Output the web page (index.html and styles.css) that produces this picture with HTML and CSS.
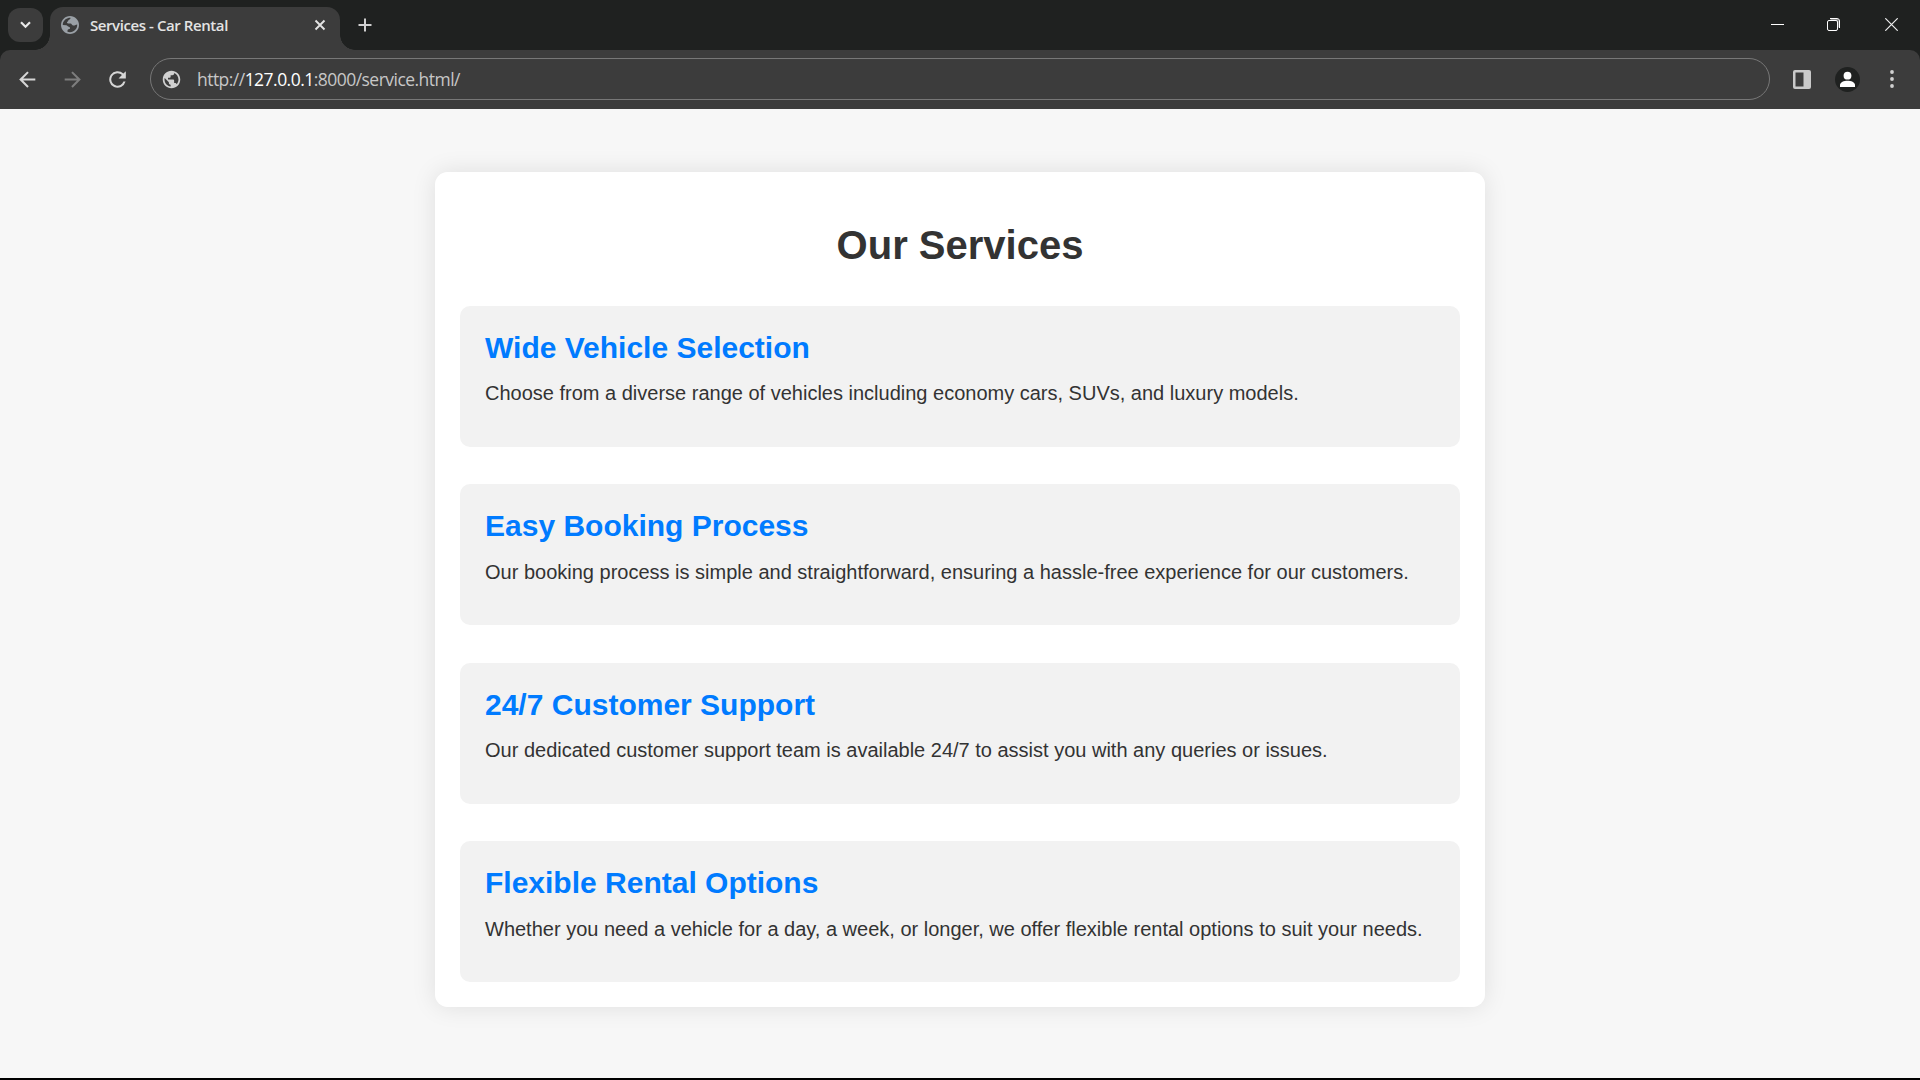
FILE: index.html
```html
<!DOCTYPE html>
<html lang="en">
<head>
<meta charset="utf-8">
<title>Services - Car Rental</title>
<link rel="stylesheet" href="styles.css">
</head>
<body>
<header class="browser">
  <div class="tabstrip">
    <button class="tab-search" aria-label="Search tabs"><svg width="35" height="34" viewBox="0 0 35 34"><path d="M13 14.2l4.5 4.5 4.5-4.5" fill="none" stroke="#e8e8e8" stroke-width="2.2"/></svg></button>
    <div class="tab">
      <svg class="tab-globe" width="18" height="18" viewBox="2 2 20 20"><path fill="#9aa0a6" d="M12 2C6.480 2 2 6.480 2 12s4.480 10 10 10 10-4.480 10-10S17.520 2 12 2z"/><path fill="#3c3c3c" d="M4 10.500 C5 6.500 8.500 3.900 12.500 4 C12.800 5.300 11.800 5.800 10.800 6.200 C9.800 6.600 10.200 8.100 9 8.500 C8.200 8.800 8.700 10.400 10 10.400 H12.500 C14 10.400 14 12.500 15.300 12.500 H17 C18 12.500 18.200 11.500 20 11.500 C20.300 16 16.700 20 12 20 C11 20 10 19.800 9.200 19.500 V18.500 C9.200 17.300 10.100 16.800 11.200 16.500 C12.500 16.200 12.300 14.300 10.800 13.900 C9.300 13.600 9.200 12.400 7.800 12.200 L4 12z"/></svg>
      <span class="tab-title">Services - Car Rental</span>
      <svg width="12" height="12" viewBox="0 0 12 12"><path d="M1.500 1.500l9 9m0-9l-9 9" fill="none" stroke="#e3e3e3" stroke-width="1.900"/></svg>
    </div>
    <svg class="new-tab" width="14" height="14" viewBox="0 0 14 14"><path d="M7 .500v13M.500 7h13" stroke="#d0d0d0" stroke-width="2"/></svg>
    <div class="window-controls">
      <svg width="13" height="13" viewBox="0 0 13 13"><path d="M0 6.500h13" stroke="#fff"/></svg>
      <svg width="13" height="13" viewBox="0 0 13 13"><path d="M3.500 1.500h6q1.500 0 1.500 1.500v6.500" fill="none" stroke="#888" stroke-width="1.500"/><rect x=".5" y="2.500" width="10" height="10" rx="1.500" fill="none" stroke="#fff"/><path d="M3 .500h7q2.500 0 2.500 2.500v7" fill="none" stroke="#fff"/></svg>
      <svg class="close" width="13" height="13" viewBox="0 0 13 13"><path d="M.3.300l12.400 12.400M12.700.300L.3 12.700" stroke="#eee" stroke-width="1.200"/></svg>
    </div>
  </div>
  <div class="toolbar">
    <svg class="nav-icon" width="25" height="25" viewBox="0 0 24 24"><path fill="#d6d6d6" d="M19.500 11H7.800l5.400-5.400L11.800 4.200 4 12l7.800 7.800 1.400-1.400L7.800 13h11.700z"/></svg>
    <svg class="nav-icon" width="25" height="25" viewBox="0 0 24 24"><path fill="#7d7d7d" d="M4.500 11h11.700l-5.400-5.400 1.400-1.400L20 12l-7.800 7.800-1.400-1.400 5.400-5.400H4.500z"/></svg>
    <svg class="nav-icon" width="25" height="25" viewBox="0 0 24 24"><path fill="#d6d6d6" d="M17.650 6.350A7.950 7.950 0 1 0 19.730 14h-2.080A6 6 0 1 1 12 6c1.660 0 3.140.690 4.220 1.780L13 11h7V4z"/></svg>
    <div class="address">
      <svg width="21" height="21" viewBox="0 0 24 24"><path fill="#d0d0d0" d="M12 2C6.480 2 2 6.480 2 12s4.480 10 10 10 10-4.480 10-10S17.520 2 12 2zm-1 17.930c-3.950-.490-7-3.850-7-7.930 0-.620.080-1.210.210-1.790L9 15v1c0 1.100.900 2 2 2v1.930zm6.900-2.540c-.260-.810-1-1.390-1.900-1.390h-1v-3c0-.550-.450-1-1-1H8v-2h2c.550 0 1-.450 1-1V7h2c1.100 0 2-.900 2-2v-.410c2.930 1.190 5 4.060 5 7.410 0 2.080-.800 3.970-2.100 5.390z"/></svg>
      <span class="url">http://<b>127.0.0.1</b>:8000/service.html/</span>
    </div>
    <div class="actions">
      <svg width="18" height="19" viewBox="0 0 18 19"><rect width="18" height="19" rx="2" fill="#c9c9c9"/><path d="M2.500 2.500h8v14h-8z" fill="#3c3c3c"/></svg>
      <svg width="25" height="25" viewBox="0 0 25 25"><circle cx="12.500" cy="12.500" r="12.500" fill="#1f2120"/><circle cx="12.500" cy="8.700" r="3.900" fill="#fff"/><path d="M5 20v-2c0-2.700 4-4.200 7.500-4.200S20 15.300 20 18v2z" fill="#fff"/></svg>
      <svg width="4" height="18" viewBox="0 0 4 18"><g fill="#d0d0d0"><circle cx="2" cy="2" r="1.900"/><circle cx="2" cy="9" r="1.900"/><circle cx="2" cy="16" r="1.900"/></g></svg>
    </div>
  </div>
</header>
<main class="page">
  <section class="container">
    <h1>Our Services</h1>
    <div class="services">
      <article class="service"><h2>Wide Vehicle Selection</h2><p>Choose from a diverse range of vehicles including economy cars, SUVs, and luxury models.</p></article>
      <article class="service"><h2>Easy Booking Process</h2><p>Our booking process is simple and straightforward, ensuring a hassle-free experience for our customers.</p></article>
      <article class="service"><h2>24/7 Customer Support</h2><p>Our dedicated customer support team is available 24/7 to assist you with any queries or issues.</p></article>
      <article class="service"><h2>Flexible Rental Options</h2><p>Whether you need a vehicle for a day, a week, or longer, we offer flexible rental options to suit your needs.</p></article>
    </div>
  </section>
</main>
</body>
</html>
```
FILE: styles.css
```css
* { box-sizing: border-box; margin: 0; }
body { height: 1080px; overflow: hidden; background: #000; font-family: "Liberation Sans", Arial, sans-serif; color: #333; }
svg { display: block; flex: none; }

.browser { height: 109px; background: #1f2120; font-family: "Open Sans", "Noto Sans", sans-serif; }
.tabstrip { height: 50px; display: flex; padding-left: 8px; }
.tab-search { width: 35px; height: 34px; margin: 8px 7px 0 0; padding: 0; border: 0; border-radius: 12px; background: #3c3c3c; }
.tab { position: relative; width: 290px; height: 43px; margin-top: 7px; padding: 0 14px 7px 11px; display: flex; align-items: center; background: #3c3c3c; border-radius: 13px 13px 0 0; }
.tab::before, .tab::after { content: ""; position: absolute; bottom: 0; width: 15px; height: 15px; }
.tab::before { left: -15px; background: radial-gradient(circle at 0 0, transparent 14.5px, #3c3c3c 15px); }
.tab::after { right: -15px; background: radial-gradient(circle at 100% 0, transparent 14.5px, #3c3c3c 15px); }
.tab-title { flex: 1; margin-left: 11px; font-size: 15px; font-weight: 600; line-height: 20px; letter-spacing: -0.42px; color: #e3e3e3; white-space: nowrap; }
.new-tab { margin: 18px 0 0 18px; }
.window-controls { display: flex; gap: 43px; margin: 18px 22px 0 auto; }
.close { margin-left: 2px; }
.toolbar { height: 59px; display: flex; align-items: center; background: #3c3c3c; border-radius: 10px 10px 0 0; padding: 0 26px 1px 15px; }
.nav-icon { margin-right: 20px; }
.address { flex: 1; height: 42px; padding-left: 10px; display: flex; align-items: center; border: 1px solid #777; border-radius: 21px; }
.url { margin-left: 15px; font-size: 17.5px; line-height: 24px; letter-spacing: -0.53px; color: #c7c7c7; white-space: nowrap; }
.url b { font-weight: 400; color: #fff; }
.actions { display: flex; align-items: center; gap: 24px; margin-left: 23px; }
.actions svg:last-child { margin-left: 6px; }

.page { height: 969px; padding-top: 63px; background: #f7f7f7; }
.container { width: 1050px; height: 835px; margin: 0 auto; padding: 50px 25px 0; background: #fff; border-radius: 12.5px; box-shadow: 0 0 25px rgba(0, 0, 0, .1); }
h1 { height: 83.9px; font-size: 40px; line-height: 46px; text-align: center; }
.services { display: grid; gap: 37.5px; }
.service { height: 141px; padding: 25px; background: #f2f2f2; border-radius: 10px; }
h2 { font-size: 30px; line-height: 33px; color: #007bff; }
p { margin-top: 18.5px; font-size: 20px; line-height: 23px; white-space: nowrap; }
```
